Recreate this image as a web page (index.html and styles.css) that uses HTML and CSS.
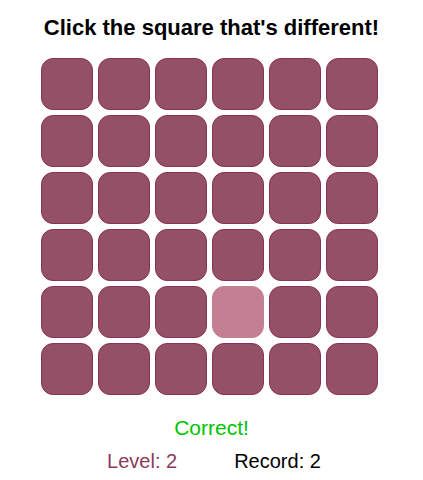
FILE: index.html
```html
<!DOCTYPE html>
<html>
<head>
<meta charset="utf-8">
<link rel="stylesheet" href="styles.css">
</head>
<body>
<div class="game">
  <h1 class="title">Click the square that's different!</h1>
  <div class="grid">
    <div class="sq"></div><div class="sq"></div><div class="sq"></div><div class="sq"></div><div class="sq"></div><div class="sq"></div>
    <div class="sq"></div><div class="sq"></div><div class="sq"></div><div class="sq"></div><div class="sq"></div><div class="sq"></div>
    <div class="sq"></div><div class="sq"></div><div class="sq"></div><div class="sq"></div><div class="sq"></div><div class="sq"></div>
    <div class="sq"></div><div class="sq"></div><div class="sq"></div><div class="sq"></div><div class="sq"></div><div class="sq"></div>
    <div class="sq"></div><div class="sq"></div><div class="sq"></div><div class="sq odd"></div><div class="sq"></div><div class="sq"></div>
    <div class="sq"></div><div class="sq"></div><div class="sq"></div><div class="sq"></div><div class="sq"></div><div class="sq"></div>
  </div>
  <div class="message">Correct!</div>
  <div class="stats">
    <span class="level">Level: 2</span>
    <span class="record">Record: 2</span>
  </div>
</div>
</body>
</html>
```
FILE: styles.css
```css
html, body {
  margin: 0;
  padding: 0;
  background: #ffffff;
}
body {
  font-family: "Liberation Sans", Arial, Helvetica, sans-serif;
  color: #000;
}
.game {
  display: flex;
  flex-direction: column;
  align-items: center;
  padding-top: 15px;
}
.title {
  margin: 0;
  font-size: 22px;
  line-height: 25px;
  font-weight: bold;
}
.grid {
  margin-top: 18px;
  margin-right: 4px;
  display: grid;
  grid-template-columns: repeat(6, 52px);
  grid-auto-rows: 52px;
  gap: 5px;
}
.sq {
  box-sizing: border-box;
  border: 1px solid #8a3256;
  border-radius: 12px;
  background: #935066;
}
.sq.odd {
  background: #c47f92;
  border-color: #c47f92;
}
.message {
  margin-top: 21px;
  font-size: 21px;
  line-height: 23px;
  color: #00c400;
}
.stats {
  margin-top: 11px;
  display: flex;
  gap: 57px;
  padding-left: 5px;
  font-size: 20px;
  line-height: 23px;
}
.level {
  color: #8b3a5c;
}
.record {
  color: #000;
}
```
